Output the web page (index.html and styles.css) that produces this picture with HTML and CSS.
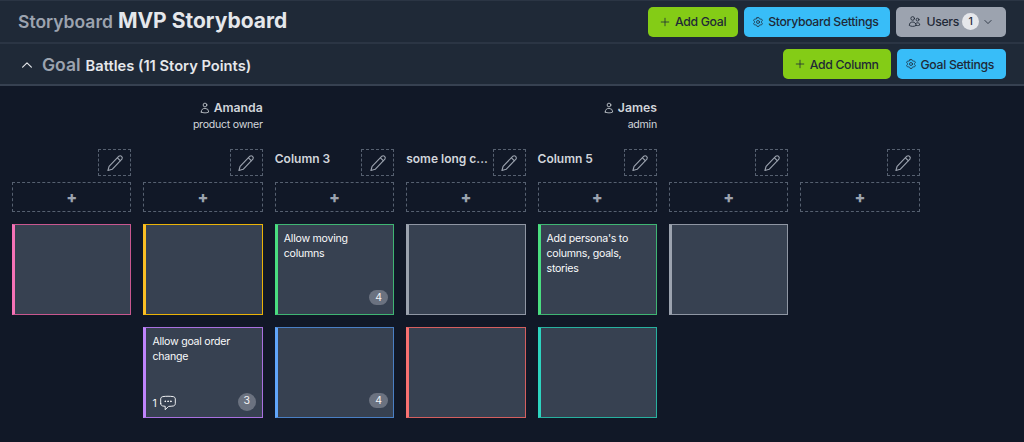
FILE: index.html
```html
<!DOCTYPE html>
<html lang="en">
<head>
  <meta charset="UTF-8" />
  <title>MVP Storyboard</title>
  <link rel="stylesheet" href="styles.css">
</head>
<body>
  <svg class="sprite" aria-hidden="true">
    <symbol id="plus" viewBox="0 0 24 24"><path d="M12 4.5v15m7.5-7.5h-15"/></symbol>
    <symbol id="cog" viewBox="0 0 24 24"><path d="M9.594 3.94c.09-.542.56-.94 1.11-.94h2.593c.55 0 1.02.398 1.11.94l.213 1.281c.063.374.313.686.645.87.074.04.147.083.22.127.324.196.72.257 1.075.124l1.217-.456a1.125 1.125 0 011.37.49l1.296 2.247a1.125 1.125 0 01-.26 1.431l-1.003.827c-.293.24-.438.613-.431.992a6.759 6.759 0 010 .255c-.007.378.138.75.43.99l1.005.828c.424.35.534.954.26 1.43l-1.298 2.247a1.125 1.125 0 01-1.369.491l-1.217-.456c-.355-.133-.75-.072-1.076.124a6.57 6.57 0 01-.22.128c-.331.183-.581.495-.644.869l-.213 1.28c-.09.543-.56.941-1.11.941h-2.594c-.55 0-1.02-.398-1.11-.94l-.213-1.281c-.062-.374-.312-.686-.644-.87a6.52 6.52 0 01-.22-.127c-.325-.196-.72-.257-1.076-.124l-1.217.456a1.125 1.125 0 01-1.369-.49l-1.297-2.247a1.125 1.125 0 01.26-1.431l1.004-.827c.292-.24.437-.613.43-.992a6.932 6.932 0 010-.255c.007-.378-.138-.75-.43-.99l-1.004-.828a1.125 1.125 0 01-.26-1.43l1.297-2.247a1.125 1.125 0 011.37-.491l1.216.456c.356.133.751.072 1.076-.124.072-.044.146-.087.22-.128.332-.183.582-.495.644-.869l.214-1.281z"/><path d="M15 12a3 3 0 11-6 0 3 3 0 016 0z"/></symbol>
    <symbol id="users" viewBox="0 0 24 24"><path d="M15 19.128a9.38 9.38 0 002.625.372 9.337 9.337 0 004.121-.952 4.125 4.125 0 00-7.533-2.493M15 19.128v-.003c0-1.113-.285-2.16-.786-3.07M15 19.128v.106A12.318 12.318 0 018.624 21c-2.331 0-4.512-.645-6.374-1.766l-.001-.109a6.375 6.375 0 0111.964-3.07M12 6.375a3.375 3.375 0 11-6.75 0 3.375 3.375 0 016.75 0zm8.25 2.25a2.625 2.625 0 11-5.25 0 2.625 2.625 0 015.25 0z"/></symbol>
    <symbol id="user" viewBox="0 0 24 24"><path d="M15.75 6a3.75 3.75 0 11-7.5 0 3.75 3.75 0 017.5 0zM4.501 20.118a7.5 7.5 0 0114.998 0A17.933 17.933 0 0112 21.75c-2.676 0-5.216-.584-7.499-1.632z"/></symbol>
    <symbol id="chevDown" viewBox="0 0 24 24"><path d="M19.5 8.25l-7.5 7.5-7.5-7.5"/></symbol>
    <symbol id="chevUp" viewBox="0 0 24 24"><path d="M4.5 15.75l7.5-7.5 7.5 7.5"/></symbol>
    <symbol id="pencil" viewBox="0 0 24 24"><path d="M17.2 2.9a2.9 2.9 0 0 1 4 4L8.2 20.4 2.6 22l1.5-5.6z"/><path d="M15.3 5.2l3.7 3.6"/></symbol>
    <symbol id="chat" viewBox="0 0 24 24"><path d="M8.625 9.75a.375.375 0 11-.75 0 .375.375 0 01.75 0zm0 0H8.25m4.125 0a.375.375 0 11-.75 0 .375.375 0 01.75 0zm0 0H12m4.125 0a.375.375 0 11-.75 0 .375.375 0 01.75 0zm0 0h-.375m-13.5 3.01c0 1.6 1.123 2.994 2.707 3.227 1.087.16 2.185.283 3.293.369V21l4.184-4.183a1.14 1.14 0 01.778-.332 48.294 48.294 0 005.83-.498c1.585-.233 2.708-1.626 2.708-3.228V6.741c0-1.602-1.123-2.995-2.707-3.228A48.394 48.394 0 0012 3c-2.392 0-4.744.175-7.043.513C3.373 3.746 2.25 5.14 2.25 6.741v6.018z"/></symbol>
  </svg>

  <header class="bar topBar">
    <h1 class="pageTitle"><span class="muted">Storyboard</span> MVP Storyboard</h1>
    <div class="actions">
      <button class="btn btnGreen"><svg class="icon"><use href="#plus"/></svg>Add Goal</button>
      <button class="btn btnBlue"><svg class="icon"><use href="#cog"/></svg>Storyboard Settings</button>
      <button class="btn btnGray"><svg class="icon iconUsers"><use href="#users"/></svg><span class="usersLabel">Users</span><span class="pill">1</span><svg class="icon iconSmall"><use href="#chevDown"/></svg></button>
    </div>
  </header>

  <section class="bar goalBar">
    <div class="goalTitle">
      <svg class="icon chevron"><use href="#chevUp"/></svg>
      <span class="goalLabel">Goal</span>
      <span class="goalName">Battles (11 Story Points)</span>
    </div>
    <div class="actions">
      <button class="btn btnGreen"><svg class="icon"><use href="#plus"/></svg>Add Column</button>
      <button class="btn btnBlue"><svg class="icon"><use href="#cog"/></svg>Goal Settings</button>
    </div>
  </section>

  <main class="board">
    <div class="column">
      <div class="persona"></div>
      <div class="colHead"><span class="colName"></span><button class="editBtn"><svg class="icon pencil"><use href="#pencil"/></svg></button></div>
      <button class="addStory">+</button>
      <div class="card pink"></div>
    </div>

    <div class="column">
      <div class="persona">
        <div class="personaName"><svg class="icon"><use href="#user"/></svg>Amanda</div>
        <div class="personaRole">product owner</div>
      </div>
      <div class="colHead"><span class="colName"></span><button class="editBtn"><svg class="icon pencil"><use href="#pencil"/></svg></button></div>
      <button class="addStory">+</button>
      <div class="card yellow"></div>
      <div class="card purple">
        <p class="cardText">Allow goal order change</p>
        <div class="comments">1<svg class="icon chat"><use href="#chat"/></svg></div>
        <span class="points round">3</span>
      </div>
    </div>

    <div class="column">
      <div class="persona"></div>
      <div class="colHead"><span class="colName">Column 3</span><button class="editBtn"><svg class="icon pencil"><use href="#pencil"/></svg></button></div>
      <button class="addStory">+</button>
      <div class="card green">
        <p class="cardText">Allow moving columns</p>
        <span class="points">4</span>
      </div>
      <div class="card blue"><span class="points">4</span></div>
    </div>

    <div class="column">
      <div class="persona"></div>
      <div class="colHead"><span class="colName">some long c...</span><button class="editBtn"><svg class="icon pencil"><use href="#pencil"/></svg></button></div>
      <button class="addStory">+</button>
      <div class="card gray"></div>
      <div class="card red"></div>
    </div>

    <div class="column">
      <div class="persona">
        <div class="personaName"><svg class="icon"><use href="#user"/></svg>James</div>
        <div class="personaRole">admin</div>
      </div>
      <div class="colHead"><span class="colName">Column 5</span><button class="editBtn"><svg class="icon pencil"><use href="#pencil"/></svg></button></div>
      <button class="addStory">+</button>
      <div class="card green">
        <p class="cardText">Add persona's to columns, goals, stories</p>
      </div>
      <div class="card teal"></div>
    </div>

    <div class="column">
      <div class="persona"></div>
      <div class="colHead"><span class="colName"></span><button class="editBtn"><svg class="icon pencil"><use href="#pencil"/></svg></button></div>
      <button class="addStory">+</button>
      <div class="card gray"></div>
    </div>

    <div class="column">
      <div class="persona"></div>
      <div class="colHead"><span class="colName"></span><button class="editBtn"><svg class="icon pencil"><use href="#pencil"/></svg></button></div>
      <button class="addStory">+</button>
    </div>
  </main>
</body>
</html>
```

FILE: styles.css
```css
html, body {
  margin: 0;
  height: 100%;
  overflow: hidden;
}

body {
  background: #111827;
  color: #e5e7eb;
  font-family: Inter, "Liberation Sans", sans-serif;
  font-size: 12.25px;
}

.sprite {
  width: 0;
  height: 0;
  position: absolute;
}

.icon {
  width: 12px;
  height: 12px;
  flex: none;
  fill: none;
  stroke: currentColor;
  stroke-width: 1.6;
  stroke-linecap: round;
  stroke-linejoin: round;
}

.iconSmall {
  width: 10px;
  height: 10px;
  stroke-width: 2;
}

.iconUsers {
  width: 13px;
  height: 13px;
}

/* header bars */
.bar {
  display: flex;
  justify-content: space-between;
  align-items: center;
  background: #1f2937;
  border-top: 1px solid #2b3544;
  padding: 0 18px;
  box-sizing: border-box;
}

.topBar {
  height: 42px;
}

.goalBar {
  height: 44px;
  border-top: 2px solid #2b3544;
  border-bottom: 2px solid #374151;
}

.pageTitle {
  margin: 0;
  font-size: 21px;
  font-weight: 700;
  color: #e5e7eb;
  line-height: 28px;
  white-space: nowrap;
}

.muted {
  font-size: 17.5px;
  font-weight: 600;
  color: #9ca3af;
}

.goalTitle {
  display: flex;
  align-items: baseline;
  gap: 5px;
  padding-left: 2px;
  font-weight: 600;
}

.chevron {
  width: 14px;
  height: 14px;
  margin-right: 3px;
  align-self: center;
  position: relative;
  top: 1px;
  stroke-width: 2;
}

.goalLabel {
  font-size: 17.5px;
  color: #9ca3af;
}

.goalName {
  font-size: 14.7px;
  color: #e5e7eb;
}

.actions {
  display: flex;
  gap: 6px;
}

.btn {
  display: flex;
  align-items: center;
  gap: 4px;
  height: 30px;
  padding: 0 12px 0 11px;
  border: 0;
  border-radius: 5px;
  color: #1f2937;
  font: 500 12.25px Inter, "Liberation Sans", sans-serif;
  letter-spacing: -0.33px;
  white-space: nowrap;
}

.btnGreen { background: #84cc16; }
.btnBlue { background: #38bdf8; padding: 0 12px 0 8px; }
.btnGray { background: #9ca3af; padding: 0 13px 0 12px; }

.usersLabel {
  margin-left: 1px;
  margin-right: -1px;
}

.pill {
  display: flex;
  align-items: center;
  justify-content: center;
  width: 17px;
  height: 17px;
  border-radius: 50%;
  background: #e5e7eb;
  font-size: 10.5px;
}

/* board */
.board {
  display: grid;
  grid-template-columns: repeat(7, 119.4px);
  gap: 12px;
  padding: 0 12px;
  align-items: start;
}

.column {
  display: flex;
  flex-direction: column;
  min-width: 0;
}

.persona {
  height: 63px;
  padding-top: 14px;
  box-sizing: border-box;
  text-align: right;
}

.personaName {
  display: flex;
  justify-content: flex-end;
  align-items: center;
  gap: 3px;
  font-weight: 600;
  line-height: 15px;
  color: #d1d5db;
}

.personaRole {
  margin-top: 2px;
  font-size: 10.6px;
  letter-spacing: -0.25px;
  line-height: 15px;
  color: #d1d5db;
}

.colHead {
  display: flex;
  justify-content: space-between;
  align-items: flex-start;
  gap: 6px;
  height: 27px;
}

.colName {
  flex: 1;
  min-width: 0;
  font-size: 12px;
  font-weight: 600;
  line-height: 19px;
  color: #d1d5db;
  white-space: nowrap;
}

.editBtn {
  display: flex;
  align-items: center;
  justify-content: center;
  flex: none;
  width: 33px;
  height: 27px;
  padding: 0;
  background: none;
  border: 1px dashed #566070;
  color: #9ca3af;
}

.pencil {
  width: 18px;
  height: 18px;
  stroke-width: 1.5;
}

.addStory {
  height: 30px;
  margin-top: 6px;
  margin-bottom: 12px;
  padding: 0;
  background: none;
  border: 1px dashed #566070;
  color: #9ca3af;
  font: 800 16px Inter, "Liberation Sans", sans-serif;
}

.card {
  position: relative;
  box-sizing: border-box;
  height: 91px;
  margin-bottom: 12px;
  padding: 6px 6px;
  background: #374151;
  border: 1px solid;
  border-left-width: 3px;
}

.cardText {
  margin: 0;
  line-height: 15px;
  font-size: 10.6px;
  letter-spacing: -0.25px;
  color: #f9fafb;
}

/* badge in the card corner */
.points {
  position: absolute;
  right: 5px;
  bottom: 9px;
  width: 19px;
  height: 15px;
  border-radius: 8px;
  background: #6b7280;
  color: #f3f4f6;
  font-size: 10.5px;
  line-height: 15px;
  text-align: center;
}

.points.round {
  height: 18px;
  width: 18px;
  right: 6px;
  border-radius: 50%;
  line-height: 16px;
  bottom: 6px;
}

.comments {
  position: absolute;
  left: 6px;
  bottom: 5px;
  display: flex;
  align-items: center;
  gap: 2px;
  font-size: 10.5px;
  color: #f3f4f6;
}

.chat {
  width: 18px;
  height: 18px;
  stroke-width: 1.3;
}

.pink { border-color: #c8578f; border-left-color: #f472b6; }
.yellow { border-color: #eab308; border-left-color: #fbbf24; }
.green { border-color: #3fb573; border-left-color: #4ade80; }
.gray { border-color: #8f96a3; border-left-color: #9ca3af; }
.purple { border-color: #a971e0; border-left-color: #c084fc; }
.blue { border-color: #4a7fc4; border-left-color: #60a5fa; }
.red { border-color: #d45f5f; border-left-color: #f87171; }
.teal { border-color: #27b09f; border-left-color: #2dd4bf; }
```
